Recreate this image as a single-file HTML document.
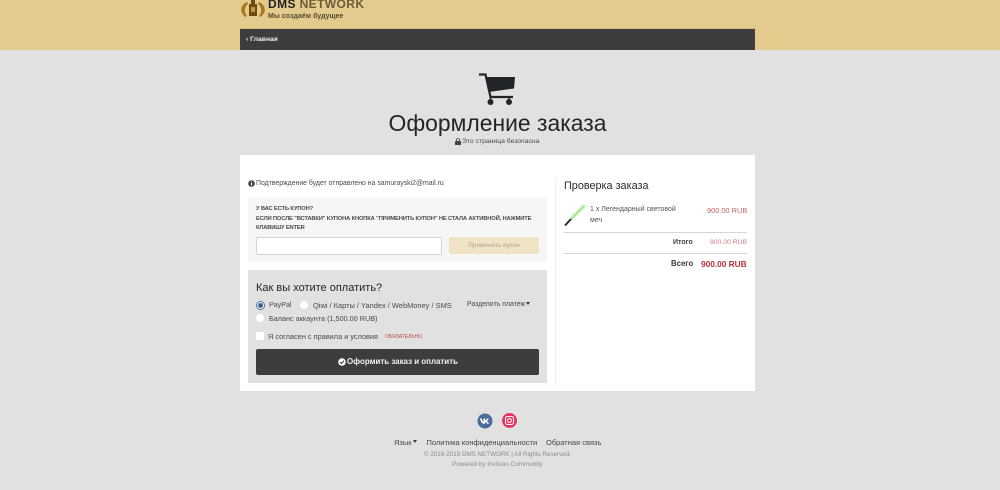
<!DOCTYPE html>
<html lang="ru"><head><meta charset="utf-8"><title>Оформление заказа</title>
<style>
html,body{margin:0;padding:0;width:1000px;height:490px;overflow:hidden;background:#e1e1e1;font-family:"Liberation Sans",sans-serif;color:#4a4a4a}
#w{position:absolute;left:0;top:0;width:1000px;height:490px;filter:blur(.3px)}
.a{position:absolute;white-space:nowrap}
.s{font-size:7.4px;line-height:9px}
.t{display:inline-block;width:0;height:0;border:2.500px solid transparent;border-top:3px solid #3a3a3a;border-bottom:0;vertical-align:1.500px;margin-left:1px}
</style></head><body><div id="w">
<div class="a" style="left:0;top:0;width:1000px;height:50px;background:#e3ca8d"></div>
<div class="a" style="left:240px;top:28px;width:515px;height:22px;background:#3d3d3d;border-top:1px solid #d3bb80;box-sizing:border-box"></div>
<svg class="a" style="left:240px;top:0" width="26" height="20" viewBox="0 0 26 20"><path d="M11 0h4v4h2v12H9V4h2z" fill="#6d4c14"/><path d="M7 2C2 4 0 9 2 13l3 4 2-1C4 12 4 7 8 4zM19 2c5 2 7 7 5 11l-3 4-2-1c3-4 3-9-1-12z" fill="#a7771f"/><rect x="11" y="7" width="4" height="5" fill="#c49a3e"/></svg>
<div class="a" style="left:268px;top:-3px;font:bold 12px/14px 'Liberation Sans',sans-serif;letter-spacing:.4px;color:#222">DMS <span style="color:#6b5c3b">NETWORK</span></div>
<div class="a" style="left:268px;top:12px;font:bold 6.900px/9px 'Liberation Sans',sans-serif;color:#544a32;letter-spacing:.1px">Мы создаём будущее</div>
<div class="a" style="left:246px;top:35px;font:bold 6.800px/9px 'Liberation Sans',sans-serif;color:#f2f2f2">‹ Главная</div>

<svg class="a" style="left:478px;top:72px" width="38" height="34" viewBox="0 0 38 34"><path d="M1 2.500H7.500L12.500 25H35" fill="none" stroke="#212529" stroke-width="2.200"/><path d="M8.500 5H37L36 16.500L11 20z" fill="#212529"/><path d="M12.500 25v3M31 25v3" stroke="#212529" stroke-width="1.500"/><circle cx="12.500" cy="30" r="3" fill="#212529"/><circle cx="31" cy="30" r="3" fill="#212529"/></svg>
<div class="a" style="left:240px;width:515px;top:108.500px;text-align:center;font-size:22.900px;line-height:28px;color:#212529">Оформление заказа</div>
<svg class="a" style="left:455px;top:138px" width="6" height="7" viewBox="0 0 6 7"><path d="M1.500 3V2a1.500 1.500 0 0 1 3 0v1" fill="none" stroke="#444" stroke-width=".8"/><rect y="3" width="6" height="4" rx=".5" fill="#444"/></svg>
<div class="a s" style="left:462px;top:137px;font-size:6.800px">Это страница безопасна</div>

<div class="a" style="left:240px;top:155px;width:515px;height:236px;background:#fff"></div>
<div class="a" style="left:555px;top:179px;width:1px;height:205px;background:#eee"></div>
<svg class="a" style="left:248px;top:180px" width="7" height="7" viewBox="0 0 7 7"><circle cx="3.500" cy="3.500" r="3.300" fill="#444"/><rect x="3" y="3" width="1" height="2.500" fill="#fff"/><rect x="3" y="1.500" width="1" height="1" fill="#fff"/></svg>
<div class="a s" style="left:256px;top:179px;font-size:6.900px">Подтверждение будет отправлено на samurayski2@mail.ru</div>

<div class="a" style="left:248px;top:197px;width:299px;height:65px;background:#f6f6f6"></div>
<div class="a" style="left:256px;top:205px;font:bold 5.800px/9.700px 'Liberation Sans',sans-serif;letter-spacing:-.17px;color:#4a4a4a">У ВАС ЕСТЬ КУПОН?<br>ЕСЛИ ПОСЛЕ "ВСТАВКИ" КУПОНА КНОПКА "ПРИМЕНИТЬ КУПОН" НЕ СТАЛА АКТИВНОЙ, НАЖМИТЕ<br>КЛАВИШУ ENTER</div>
<div class="a" style="left:256px;top:237px;width:186px;height:18px;background:#fff;border:1px solid #d5d5d5;border-radius:2px;box-sizing:border-box"></div>
<div class="a" style="left:449px;top:237px;width:90px;height:17px;background:#f1e4c6;border-radius:2px;text-align:center;font-size:6.400px;line-height:17px;color:#a9a294">Применить купон</div>

<div class="a" style="left:248px;top:270px;width:299px;height:113px;background:#e1e1e1"></div>
<div class="a" style="left:256px;top:279.500px;font-size:11px;line-height:16px;color:#212529">Как вы хотите оплатить?</div>
<div class="a" style="left:256px;top:301px;width:7px;height:7px;border-radius:50%;background:#fff;border:1px solid #4a6fa5;box-sizing:content-box"></div>
<div class="a" style="left:258px;top:303px;width:5px;height:5px;border-radius:50%;background:#3d5f96"></div>
<div class="a s" style="left:269px;top:300.500px;font-size:7.100px">PayPal</div>
<div class="a" style="left:300px;top:301px;width:8px;height:8px;border-radius:50%;background:#fff"></div>
<div class="a s" style="left:313px;top:300.500px;font-size:7.450px">Qiwi / Карты / Yandex / WebMoney / SMS</div>
<div class="a s" style="left:467px;top:300px;font-size:6.900px">Разделить платеж<span class="t"></span></div>
<div class="a" style="left:256px;top:314px;width:8px;height:8px;border-radius:50%;background:#fff"></div>
<div class="a s" style="left:269px;top:313.500px;font-size:7.250px">Баланс аккаунта (1,500.00 RUB)</div>
<div class="a" style="left:256px;top:332px;width:8px;height:8px;background:#fff;border-radius:1px"></div>
<div class="a s" style="left:268px;top:331.500px;font-size:7.350px">Я согласен с правила и условия</div>
<div class="a" style="left:385px;top:334px;font:5px/7px 'Liberation Sans',sans-serif;color:#b5474a">ОБЯЗАТЕЛЬНО</div>
<div class="a" style="left:256px;top:349px;width:283px;height:26px;background:#3d3d3d;border-radius:2px"></div>
<svg class="a" style="left:338px;top:358px" width="8" height="8" viewBox="0 0 8 8"><circle cx="4" cy="4" r="3.800" fill="#fff"/><path d="M2 4l1.500 1.500L6 2.800" fill="none" stroke="#3d3d3d" stroke-width="1.100"/></svg>
<div class="a" style="left:347px;top:356px;font-size:7.950px;line-height:12px;font-weight:bold;color:#f2f2f2">Оформить заказ и оплатить</div>

<div class="a" style="left:564px;top:178.500px;font-size:10.850px;line-height:14px;color:#2b2b2b">Проверка заказа</div>
<svg class="a" style="left:564px;top:204px" width="22" height="23" viewBox="0 0 22 23"><path d="M21 1L7 15" stroke="#d3f5c8" stroke-width="4"/><path d="M20 2L7 15" stroke="#a3e893" stroke-width="1.800"/><path d="M7 15L1 21.500" stroke="#2b2b2b" stroke-width="2"/></svg>
<div class="a" style="left:590px;top:204px;font-size:7px;line-height:11px;color:#555;white-space:normal;width:95px">1 x Легендарный световой меч</div>
<div class="a" style="left:707px;top:205.500px;font:7.400px/10px 'Liberation Sans',sans-serif;color:#c2646a">900.00 RUB</div>
<div class="a" style="left:564px;top:232px;width:183px;height:1px;background:#d5d5d5"></div>
<div class="a" style="left:673px;top:238px;font:bold 7px/10px 'Liberation Sans',sans-serif;color:#444">Итого</div>
<div class="a" style="left:710px;top:238px;font:6.800px/10px 'Liberation Sans',sans-serif;color:#cf8085">900.00 RUB</div>
<div class="a" style="left:564px;top:253px;width:183px;height:1px;background:#d5d5d5"></div>
<div class="a" style="left:671px;top:258px;font:bold 7.800px/12px 'Liberation Sans',sans-serif;color:#3a3a3a">Всего</div>
<div class="a" style="left:701px;top:258px;font:bold 8.300px/12px 'Liberation Sans',sans-serif;color:#b5343c">900.00 RUB</div>

<svg class="a" style="left:477px;top:413px" width="16" height="16" viewBox="0 0 16 16"><circle cx="8" cy="8" r="7.500" fill="#4c6d99"/><path d="M3 5.500h1.800c.4 2 1.200 3 1.700 3.200V5.500h1.600v2c1-.3 1.500-1.300 1.800-2h1.700c-.3 1.200-1.100 2.200-1.800 2.700.8.400 1.600 1.200 2.200 2.600h-1.900c-.5-1.100-1.100-1.700-2-1.900v1.900H7.300C5 10.800 3.500 8.500 3 5.500z" fill="#fff"/></svg>
<svg class="a" style="left:502px;top:413px" width="15" height="15" viewBox="0 0 15 15"><circle cx="7.500" cy="7.500" r="7.500" fill="#e4365f"/><rect x="3.500" y="3.500" width="8" height="8" rx="2" fill="none" stroke="#fff" stroke-width="1"/><circle cx="7.500" cy="7.500" r="1.900" fill="none" stroke="#fff" stroke-width="1"/></svg>
<div class="a s" style="left:394px;top:437.500px;font-size:7.500px;color:#454545">Язык<span class="t"></span></div>
<div class="a s" style="left:426.500px;top:437.500px;font-size:7.500px;color:#454545">Политика конфиденциальности</div>
<div class="a s" style="left:546px;top:437.500px;font-size:7.500px;color:#454545">Обратная связь</div>
<div class="a" style="left:424px;top:450px;font-size:6.250px;line-height:9px;color:#8b8b8b">© 2016-2019 DMS NETWORK | All Rights Reserved.</div>
<div class="a" style="left:452px;top:460px;font-size:6.350px;line-height:9px;color:#8b8b8b">Powered by Invision Community</div>
</div></body></html>
